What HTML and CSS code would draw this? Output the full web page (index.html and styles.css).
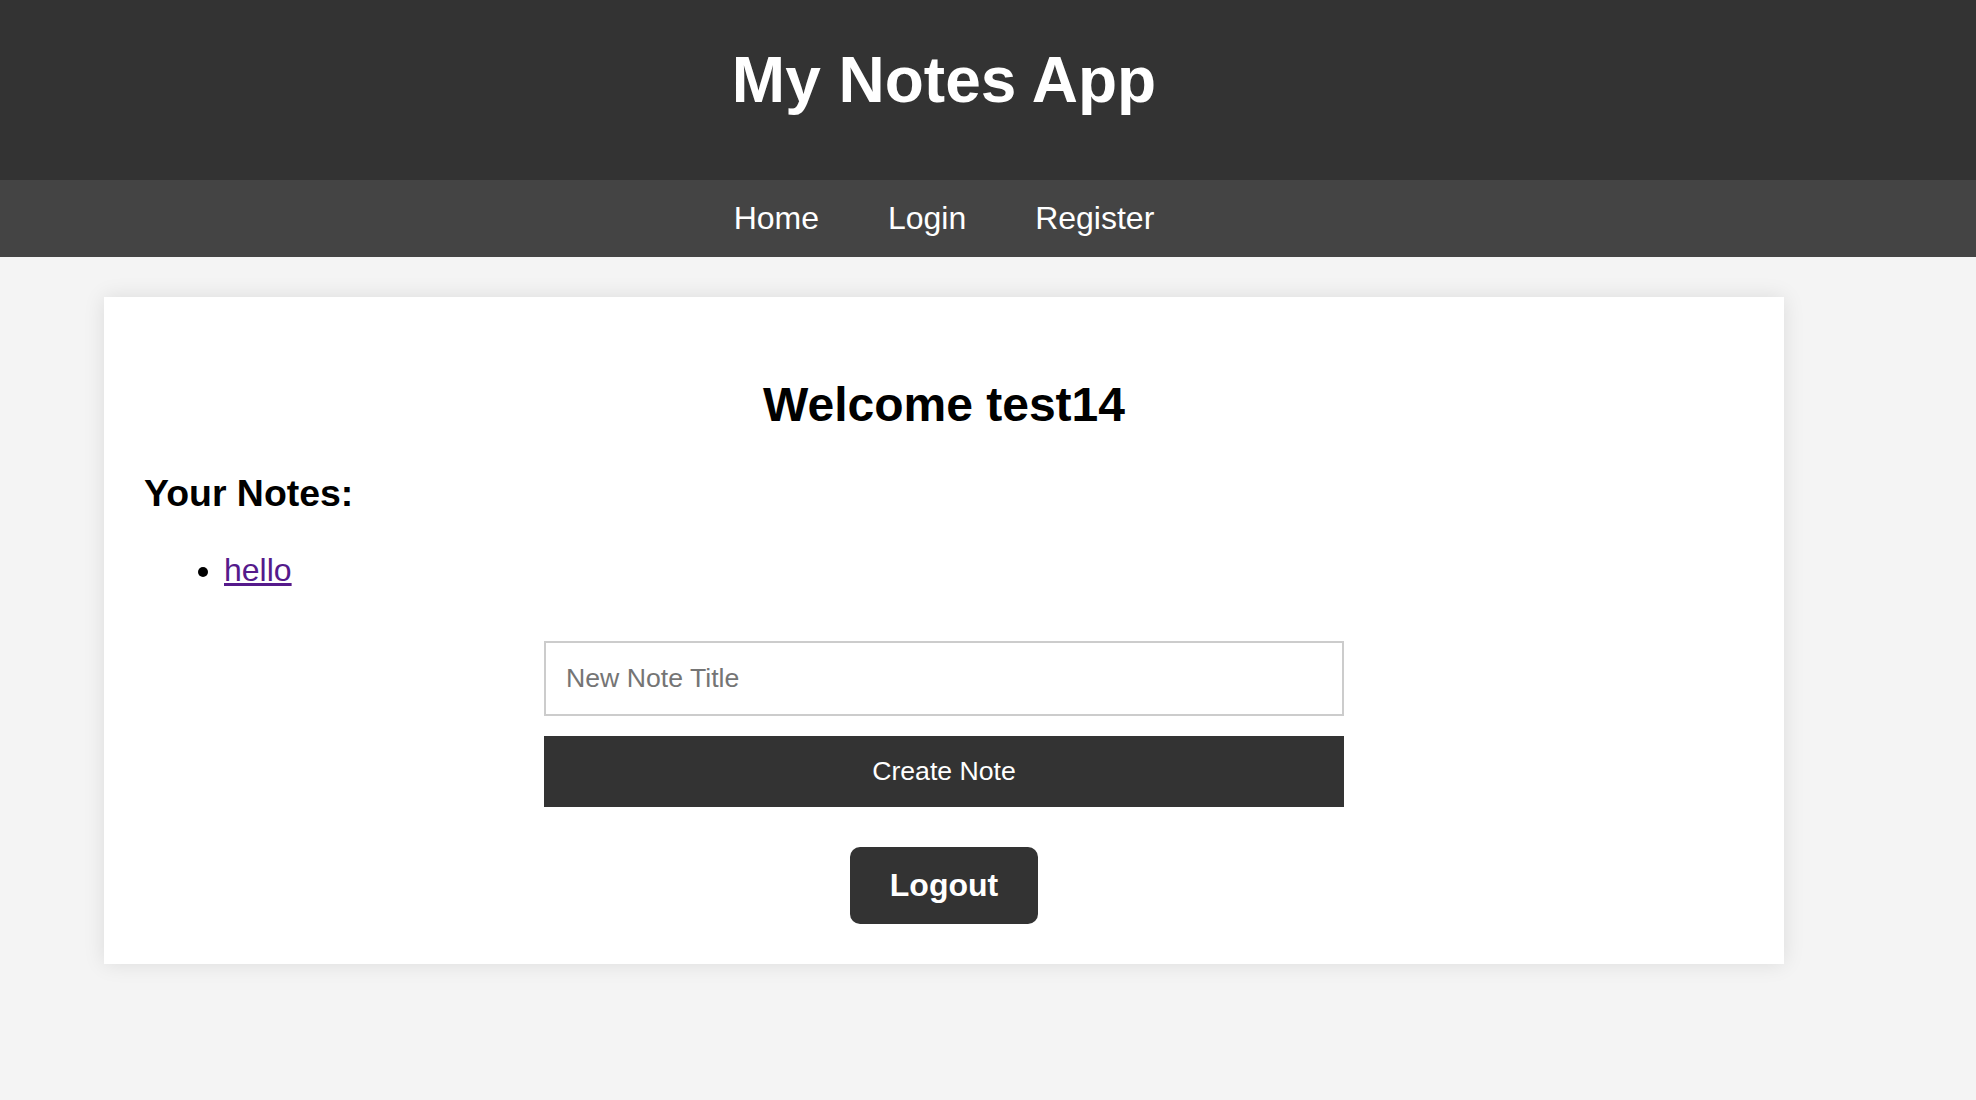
FILE: index.html
```html
<!DOCTYPE html>
<html lang="en">
<head>
<meta charset="utf-8">
<title>My Notes App</title>
<link rel="stylesheet" href="styles.css">
</head>
<body>
<header class="site-header">
  <h1 class="site-title">My Notes App</h1>
</header>
<nav class="site-nav">
  <a href="#" class="nav-link">Home</a>
  <a href="#" class="nav-link">Login</a>
  <a href="#" class="nav-link">Register</a>
</nav>
<main class="main">
  <section class="card">
    <h2 class="welcome">Welcome test14</h2>
    <h3 class="notes-heading">Your Notes:</h3>
    <ul class="notes-list">
      <li><a href="#" class="note-link">hello</a></li>
    </ul>
    <form class="note-form">
      <input type="text" class="note-input" placeholder="New Note Title">
      <button type="button" class="create-btn">Create Note</button>
    </form>
    <div class="logout-row">
      <button type="button" class="logout-btn">Logout</button>
    </div>
  </section>
</main>
</body>
</html>
```
FILE: styles.css
```css
html, body {
  margin: 0;
  padding: 0;
}
body {
  background: #f4f4f4;
  font-family: "Liberation Sans", Arial, sans-serif;
  color: #000;
}
.site-header {
  background: #333;
  color: #fff;
  text-align: center;
  padding: 43px 88px 63px 0;
}
.site-title {
  margin: 0;
  font-size: 64px;
  font-weight: bold;
}
.site-nav {
  background: #444;
  text-align: center;
  padding: 20px 88px 20px 0;
  font-size: 32px;
}
.nav-link {
  color: #fff;
  text-decoration: none;
  margin: 0 30px;
}
.main {
  padding: 40px 88px 40px 0;
}
.card {
  width: 1680px;
  box-sizing: border-box;
  margin: 0 auto;
  background: #fff;
  padding: 40px;
  box-shadow: 0 0 20px rgba(0, 0, 0, 0.1);
}
.welcome {
  text-align: center;
  font-size: 48px;
  margin: 40px 0;
}
.notes-heading {
  font-size: 37.44px;
  margin: 40px 0 37.44px;
}
.notes-list {
  font-size: 32px;
  margin: 32px 0;
  padding-left: 80px;
}
.note-link {
  color: #551a8b;
}
.note-form {
  display: flex;
  flex-direction: column;
  align-items: center;
  gap: 20px;
  padding: 20px 0;
}
.note-input {
  box-sizing: border-box;
  width: 800px;
  border: 2px solid #ccc;
  padding: 20px;
  font-family: "Liberation Sans", Arial, sans-serif;
  font-size: 26.67px;
  margin: 0;
  outline: none;
}
.note-input::placeholder {
  color: #757575;
}
.create-btn {
  box-sizing: border-box;
  width: 800px;
  border: none;
  background: #333;
  color: #fff;
  padding: 20px;
  font-family: "Liberation Sans", Arial, sans-serif;
  font-size: 26.67px;
  margin: 0;
}
.logout-row {
  display: flex;
  justify-content: center;
  margin-top: 20px;
}
.logout-btn {
  border: none;
  background: #333;
  color: #fff;
  font-family: "Liberation Sans", Arial, sans-serif;
  font-weight: bold;
  font-size: 32px;
  padding: 20px 40px;
  border-radius: 10px;
  margin: 0;
}
```
